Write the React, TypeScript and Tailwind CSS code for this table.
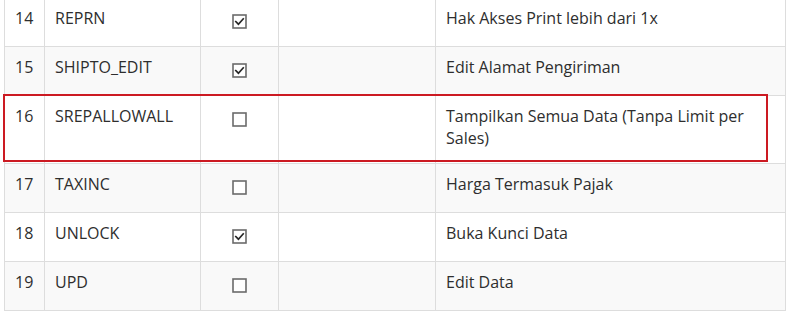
import React from "react";

type Row = { no: number; code: string; checked: boolean; desc: string };

const rows: Row[] = [
  { no: 14, code: "REPRN", checked: true, desc: "Hak Akses Print lebih dari 1x" },
  { no: 15, code: "SHIPTO_EDIT", checked: true, desc: "Edit Alamat Pengiriman" },
  { no: 16, code: "SREPALLOWALL", checked: false, desc: "Tampilkan Semua Data (Tanpa Limit per Sales)" },
  { no: 17, code: "TAXINC", checked: false, desc: "Harga Termasuk Pajak" },
  { no: 18, code: "UNLOCK", checked: true, desc: "Buka Kunci Data" },
  { no: 19, code: "UPD", checked: false, desc: "Edit Data" },
];

function Check({ checked }: { checked: boolean }) {
  return (
    <svg width="15" height="15" viewBox="0 0 15 15" className="block">
      <rect x="1" y="1" width="13" height="13" fill="#ffffff" stroke="#6b6b6b" strokeWidth="1.6" />
      {checked && (
        <path d="M3.8 7.6 L6.4 10.2 L11.2 4.9" fill="none" stroke="#262626" strokeWidth="1.7" strokeLinecap="square" />
      )}
    </svg>
  );
}

export default function App() {
  return (
    <div className="relative h-[327px] w-[794px] overflow-hidden bg-white">
      <div
        className="-mt-[3px] ml-[4px] w-[782px] border-x border-b border-[#dddddd] text-[16px] leading-[22px] text-[#2e2e2e]"
        style={{ fontFamily: '"Open Sans", "Noto Sans", sans-serif' }}
      >
        {rows.map((r, i) => (
          <div
            key={r.no}
            className={`flex border-t border-[#dddddd] ${i % 2 === 1 ? "bg-[#f9f9f9]" : "bg-white"}`}
          >
            <div className="w-[40px] shrink-0 border-r border-[#dddddd] pl-[10px] pt-[9px] pb-[14px]">{r.no}</div>
            <div className="w-[156px] shrink-0 border-r border-[#dddddd] pl-[10px] pt-[9px] pb-[14px]">{r.code}</div>
            <div className="w-[78px] shrink-0 border-r border-[#dddddd] pt-[9px] pb-[14px]">
              <div className="flex h-[25px] justify-center pt-[7px]">
                <Check checked={r.checked} />
              </div>
            </div>
            <div className="w-[157px] shrink-0 border-r border-[#dddddd] pt-[9px] pb-[14px]"></div>
            <div className="min-w-0 flex-1 pl-[10px] pr-[10px] pt-[9px] pb-[14px]">{r.desc}</div>
          </div>
        ))}
      </div>
      <div className="absolute left-[3px] top-[94px] h-[68px] w-[765px] border-2 border-[#cc1a22]"></div>
    </div>
  );
}
